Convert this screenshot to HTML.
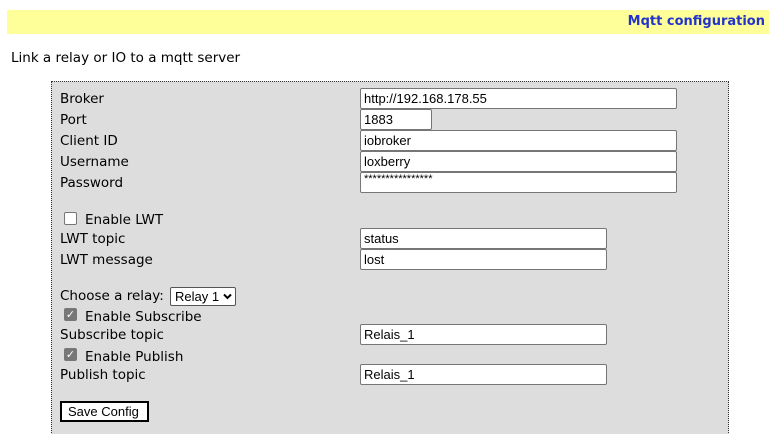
<!DOCTYPE html>
<html><head><style>
*{margin:0;padding:0;box-sizing:border-box}
html,body{width:780px;height:434px;overflow:hidden}
body{background:#fff;font-family:"DejaVu Sans","Liberation Sans",sans-serif;font-size:13.5px;color:#000;position:relative}
.a{position:absolute;white-space:nowrap}
.bar{left:7px;top:10px;width:762px;height:24px;background:#ffff99}
.ttl{right:15px;top:14px;font-weight:bold;color:#2233cc;font-size:13px}
.box{left:51px;top:81px;width:678px;height:360px;background:#dddddd;border:1px dotted #333}
.in{position:absolute;background:#fff;border:1px solid #767676;border-radius:2px;font-family:"Liberation Sans",Arial,sans-serif;font-size:13px;padding:1px 0 0 3px;height:21px;line-height:17px}
.cb{position:absolute;width:13px;height:13px;border-radius:2px}
</style></head><body>
<div class="a bar"></div>
<div class="a ttl">Mqtt configuration</div>
<div class="a" style="left:11px;top:50px">Link a relay or IO to a mqtt server</div>
<div class="a box"></div>
<div class="a" style="left:60px;top:91px">Broker</div>
<div class="a" style="left:60px;top:112px">Port</div>
<div class="a" style="left:60px;top:133px">Client ID</div>
<div class="a" style="left:60px;top:154px">Username</div>
<div class="a" style="left:60px;top:175px">Password</div>
<div class="in" style="left:360px;top:88px;width:317px">http://192.168.178.55</div>
<div class="in" style="left:360px;top:109px;width:72px">1883</div>
<div class="in" style="left:360px;top:130px;width:317px">iobroker</div>
<div class="in" style="left:360px;top:151px;width:317px">loxberry</div>
<div class="in" style="left:360px;top:172px;width:317px;font-size:11px;line-height:13px;padding-top:0">****************</div>
<div class="cb" style="left:64px;top:212px;background:#fff;border:1px solid #767676"></div>
<div class="a" style="left:85px;top:212px">Enable LWT</div>
<div class="a" style="left:60px;top:231px">LWT topic</div>
<div class="a" style="left:60px;top:252px">LWT message</div>
<div class="in" style="left:360px;top:228px;width:247px">status</div>
<div class="in" style="left:360px;top:249px;width:247px">lost</div>
<div class="a" style="left:60px;top:288px">Choose a relay:</div>
<div class="in" style="left:170px;top:287px;width:66px;height:19px;line-height:15px;padding-left:4px;border-color:#555">Relay 1<svg style="position:absolute;right:3px;top:5px" width="9" height="7" viewBox="0 0 9 7"><path d="M1 1.5L4.5 5L8 1.5" stroke="#000" stroke-width="2" fill="none"/></svg></div>
<div class="cb" style="left:64px;top:308px;background:#777;color:#fff;font-size:11px;line-height:13px;text-align:center;font-weight:bold">&#10003;</div>
<div class="a" style="left:85px;top:309px">Enable Subscribe</div>
<div class="a" style="left:60px;top:327px">Subscribe topic</div>
<div class="in" style="left:360px;top:324px;width:247px">Relais_1</div>
<div class="cb" style="left:64px;top:348px;background:#777;color:#fff;font-size:11px;line-height:13px;text-align:center;font-weight:bold">&#10003;</div>
<div class="a" style="left:85px;top:349px">Enable Publish</div>
<div class="a" style="left:60px;top:367px">Publish topic</div>
<div class="in" style="left:360px;top:364px;width:247px">Relais_1</div>
<div class="in" style="left:60px;top:401px;width:89px;height:21px;border:2px solid #000;border-radius:0;padding:0 0 0 6px;font-size:13px;line-height:17px">Save Config</div>
</body></html>
